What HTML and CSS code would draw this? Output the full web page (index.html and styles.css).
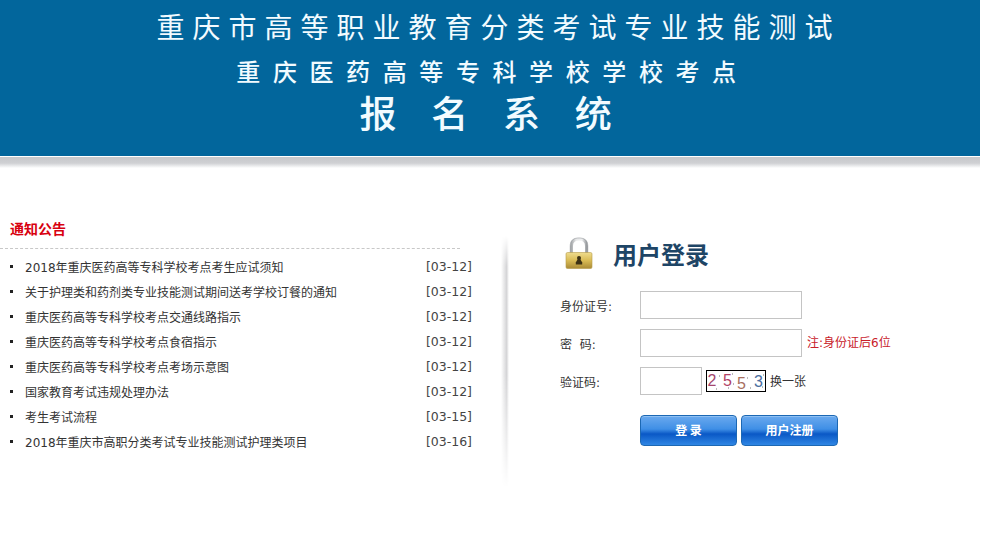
FILE: index.html
```html
<!DOCTYPE html>
<html lang="zh-CN">
<head>
    <meta charset="UTF-8">
    <title>报名系统</title>
    <link rel="stylesheet" href="styles.css">
</head>
<body>
    <div class="header">
        <h1 class="title-a">重庆市高等职业教育分类考试专业技能测试</h1>
        <h2 class="title-b">重庆医药高等专科学校学校考点</h2>
        <h2 class="title-c">报名系统</h2>
    </div>
    <div class="header-shadow"></div>

    <div class="main">
        <div class="notice">
            <div class="notice-title">通知公告</div>
            <ul class="notice-list">
                <li><a href="#">2018年重庆医药高等专科学校考点考生应试须知</a><span>[03-12]</span></li>
                <li><a href="#">关于护理类和药剂类专业技能测试期间送考学校订餐的通知</a><span>[03-12]</span></li>
                <li><a href="#">重庆医药高等专科学校考点交通线路指示</a><span>[03-12]</span></li>
                <li><a href="#">重庆医药高等专科学校考点食宿指示</a><span>[03-12]</span></li>
                <li><a href="#">重庆医药高等专科学校考点考场示意图</a><span>[03-12]</span></li>
                <li><a href="#">国家教育考试违规处理办法</a><span>[03-12]</span></li>
                <li><a href="#">考生考试流程</a><span>[03-15]</span></li>
                <li><a href="#">2018年重庆市高职分类考试专业技能测试护理类项目</a><span>[03-16]</span></li>
            </ul>
        </div>

        <div class="divider"></div>

        <div class="login">
            <div class="login-title">
                <svg class="lock" width="28" height="36" viewBox="0 0 28 36">
                    <defs>
                        <linearGradient id="shackle" x1="0" y1="0" x2="1" y2="0">
                            <stop offset="0" stop-color="#a9acae"/>
                            <stop offset="0.3" stop-color="#e6e7e8"/>
                            <stop offset="0.7" stop-color="#eeeff0"/>
                            <stop offset="1" stop-color="#9a9da0"/>
                        </linearGradient>
                        <linearGradient id="body" x1="0" y1="0" x2="0" y2="1">
                            <stop offset="0" stop-color="#efdc8e"/>
                            <stop offset="0.5" stop-color="#d9bb55"/>
                            <stop offset="1" stop-color="#a98a36"/>
                        </linearGradient>
                    </defs>
                    <path d="M6.5 18V11C6.5 6 9.5 4 14 4s7.5 2 7.5 7v7" fill="none" stroke="url(#shackle)" stroke-width="3"/>
                    <path d="M5.2 18V11C5.2 5 9 3 14 3s8.800 2 8.800 8v7" fill="none" stroke="#9c9fa2" stroke-width="0.6"/>
                    <rect x="1" y="17.500" width="26" height="16" rx="1.500" fill="url(#body)" stroke="#b59a48" stroke-width="0.6"/>
                    <circle cx="14" cy="23" r="2" fill="#3c3114"/>
                    <path d="M12.800 24h2.400l2 3.500v2h-6.400v-2z" fill="#3c3114"/>
                </svg>
                <span>用户登录</span>
            </div>
            <form class="login-form">
                <div class="form-row">
                    <label for="idcard">身份证号:</label>
                    <input type="text" id="idcard" class="text-input">
                </div>
                <div class="form-row">
                    <label for="pwd">密&nbsp;&nbsp;码:</label>
                    <input type="password" id="pwd" class="text-input">
                    <span class="hint">注:身份证后6位</span>
                </div>
                <div class="form-row">
                    <label for="code">验证码:</label>
                    <input type="text" id="code" class="text-input code-input">
                    <svg class="captcha" width="60" height="22" viewBox="0 0 60 22">
                        <rect x="0.5" y="0.5" width="59" height="21" fill="#fff" stroke="#000"/>
                        <text x="1.500" y="16" fill="#a3466f">2</text>
                        <text x="17" y="16" fill="#b03f66">5</text>
                        <text x="31" y="19" fill="#a8705f">5</text>
                        <text x="48" y="17" fill="#4a6ea0">3</text>
                        <path d="M13 6h1M26 4h1M27 14h1M41 8h1M44 18h1M57 5h1M56 17h1M10 19h1M22 18h1" stroke="#777"/>
                    </svg>
                    <a class="change" href="#">换一张</a>
                </div>
                <div class="form-buttons">
                    <button type="button" class="btn">登 录</button>
                    <button type="button" class="btn">用户注册</button>
                </div>
            </form>
        </div>
    </div>
</body>
</html>
```

FILE: styles.css
```css
* {
    margin: 0;
    padding: 0;
    box-sizing: border-box;
}

body {
    background: #fff;
    color: #333;
    font-family: "DejaVu Sans", "Noto Sans CJK SC", sans-serif;
    font-size: 12px;
    overflow: hidden;
}

a {
    color: #333;
    text-decoration: none;
}

/* 顶部 */
.header {
    width: 980px;
    height: 156px;
    background: #02669c;
    color: #f2fbff;
    text-align: center;
    padding-top: 7px;
}

.header h1,
.header h2 {
    font-family: "Noto Sans CJK SC", sans-serif;
}

.title-a {
    font-size: 28px;
    font-weight: 400;
    line-height: 38px;
    letter-spacing: 8px;
    margin-right: -17px;
}

.title-b {
    font-size: 24px;
    font-weight: 500;
    line-height: 34px;
    letter-spacing: 12.6px;
    margin-top: 9px;
    margin-right: -5px;
}

.title-c {
    font-size: 37px;
    font-weight: 500;
    line-height: 46px;
    letter-spacing: 34.7px;
    margin-top: 1px;
    margin-right: -26px;
}

.header-shadow {
    width: 980px;
    height: 12px;
    border-top: 1px solid #fff;
    background: linear-gradient(#c6c8cb, #cfd0d3 55%, #f3f4f5 90%, #fff);
}

/* 内容 */
.main {
    display: flex;
    align-items: flex-start;
    padding-top: 51px;
}

.notice {
    width: 472px;
}

.notice-title {
    color: #d8000f;
    font-weight: 700;
    font-size: 14px;
    line-height: 20px;
    padding-left: 10px;
    padding-bottom: 9px;
    width: 460px;
    border-bottom: 1px dashed #c8c8c8;
}

.notice-list {
    list-style: none;
    padding-top: 5px;
}

.notice-list li {
    display: flex;
    justify-content: space-between;
    align-items: center;
    height: 25px;
    padding-left: 25px;
    position: relative;
}

.notice-list li::before {
    content: "";
    position: absolute;
    left: 10px;
    top: 11px;
    width: 3px;
    height: 3px;
    background: #222;
}

.notice-list li span {
    font-size: 12.5px;
    color: #444;
}

.divider {
    width: 8px;
    height: 252px;
    margin: 17px 0 0 29px;
    background: linear-gradient(90deg, #fff, #d4d4d6 70%, #fff);
    -webkit-mask-image: linear-gradient(#0000, #000 12%, #000 55%, #0000);
    mask-image: linear-gradient(#0000, #000 12%, #000 55%, #0000);
}

/* 登录 */
.login {
    padding: 16px 0 0 51px;
    width: 440px;
}

.login-title {
    display: flex;
    align-items: center;
    gap: 20px;
    height: 36px;
    margin: 0 0 0 5px;
    color: #1e4566;
    font-family: "Noto Sans CJK SC", serif;
    font-size: 24px;
    font-weight: 700;
}

.lock {
    display: block;
}

.login-form {
    padding-top: 20px;
}

.form-row {
    display: flex;
    align-items: center;
    height: 28px;
    margin-bottom: 10px;
}

.form-row label {
    width: 80px;
}

.text-input {
    width: 162px;
    height: 28px;
    border: 1px solid #c4c4c4;
    background: #fff;
}

.code-input {
    width: 62px;
}

.captcha {
    margin-left: 4px;
    font-family: "Liberation Sans", sans-serif;
    font-size: 16px;
}

.change {
    margin: 0 0 2px 4px;
}

.hint {
    margin: 0 0 3px 5px;
    color: #c8202a;
}

.form-buttons {
    display: flex;
    gap: 4px;
    padding: 10px 0 0 80px;
}

.btn {
    width: 97px;
    height: 31px;
    padding-bottom: 2px;
    border: 1px solid #1c68b4;
    border-radius: 4px;
    box-shadow: inset 0 1px 0 #8fc0f3;
    background: linear-gradient(#6aa9ee, #3f8fe6 45%, #0a58c6 62%, #2f86e4);
    color: #fff;
    font-family: "Noto Sans CJK SC", sans-serif;
    font-size: 12px;
    font-weight: 700;
}
```
